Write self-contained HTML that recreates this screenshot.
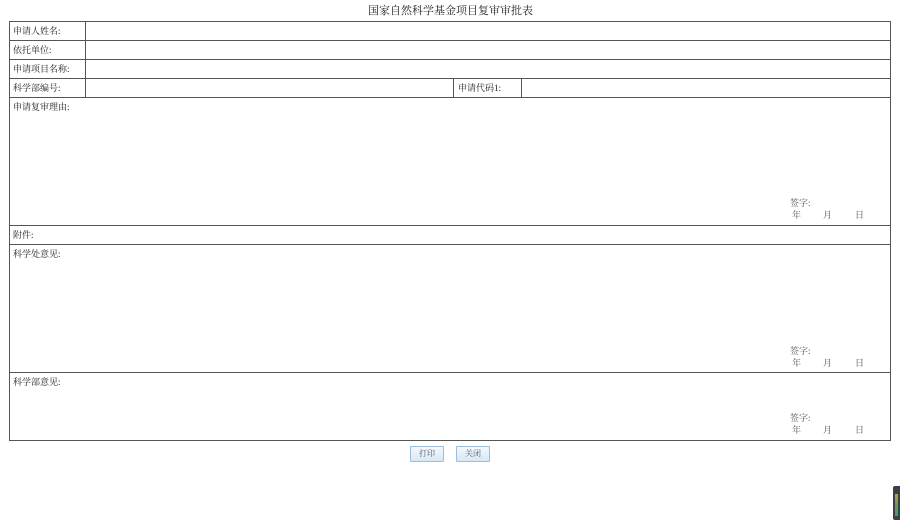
<!DOCTYPE html>
<html><head><meta charset="utf-8"><style>
*{margin:0;padding:0;box-sizing:border-box}
body{width:900px;height:525px;background:#fff;position:relative;overflow:hidden;font-family:"Liberation Serif","Noto Serif CJK SC",serif;color:#222;font-size:9px}
.h{position:absolute;height:1px;background:#555}
.v{position:absolute;width:1px;background:#555}
.t{position:absolute;white-space:nowrap;line-height:10px}
.g{color:#555}
.btn{position:absolute;top:446px;width:34px;height:16px;border:1px solid #9fbcd8;background:linear-gradient(#f4f9fe,#d6e7f7);font-size:8px;color:#555;text-align:center;line-height:14px;border-radius:1px}
</style></head><body>
<div class="t" style="left:368px;top:5px;font-size:11px;line-height:13px">国家自然科学基金项目复审审批表</div>
<div class="h" style="left:9px;width:882px;top:21px"></div>
<div class="h" style="left:9px;width:882px;top:40px"></div>
<div class="h" style="left:9px;width:882px;top:59px"></div>
<div class="h" style="left:9px;width:882px;top:78px"></div>
<div class="h" style="left:9px;width:882px;top:97px"></div>
<div class="h" style="left:9px;width:882px;top:225px"></div>
<div class="h" style="left:9px;width:882px;top:244px"></div>
<div class="h" style="left:9px;width:882px;top:372px"></div>
<div class="h" style="left:9px;width:882px;top:440px"></div>
<div class="v" style="left:9px;top:21px;height:420px"></div>
<div class="v" style="left:890px;top:21px;height:420px"></div>
<div class="v" style="left:85px;top:21px;height:77px"></div>
<div class="v" style="left:453px;top:78px;height:20px"></div>
<div class="v" style="left:521px;top:78px;height:20px"></div>
<div class="t" style="left:13px;top:26px">申请人姓名:</div>
<div class="t" style="left:13px;top:45px">依托单位:</div>
<div class="t" style="left:13px;top:64px">申请项目名称:</div>
<div class="t" style="left:13px;top:83px">科学部编号:</div>
<div class="t" style="left:458px;top:83px">申请代码1:</div>
<div class="t" style="left:13px;top:102px">申请复审理由:</div>
<div class="t" style="left:13px;top:230px">附件:</div>
<div class="t" style="left:13px;top:249px">科学处意见:</div>
<div class="t" style="left:13px;top:377px">科学部意见:</div>
<div class="t g" style="left:790px;top:198px">签字:</div>
<div class="t g" style="left:792px;top:210px">年</div>
<div class="t g" style="left:823px;top:210px">月</div>
<div class="t g" style="left:855px;top:210px">日</div>
<div class="t g" style="left:790px;top:346px">签字:</div>
<div class="t g" style="left:792px;top:358px">年</div>
<div class="t g" style="left:823px;top:358px">月</div>
<div class="t g" style="left:855px;top:358px">日</div>
<div class="t g" style="left:790px;top:413px">签字:</div>
<div class="t g" style="left:792px;top:425px">年</div>
<div class="t g" style="left:823px;top:425px">月</div>
<div class="t g" style="left:855px;top:425px">日</div>
<div class="btn" style="left:410px">打印</div>
<div class="btn" style="left:456px">关闭</div>
<div style="position:absolute;left:893px;top:486px;width:7px;height:34px;background:#3a4048;border-radius:2px 0 0 2px">
<div style="position:absolute;left:2px;top:8px;width:3px;height:22px;background:linear-gradient(#b9a040,#6a9a50,#3a9a8a)"></div></div>
</body></html>
